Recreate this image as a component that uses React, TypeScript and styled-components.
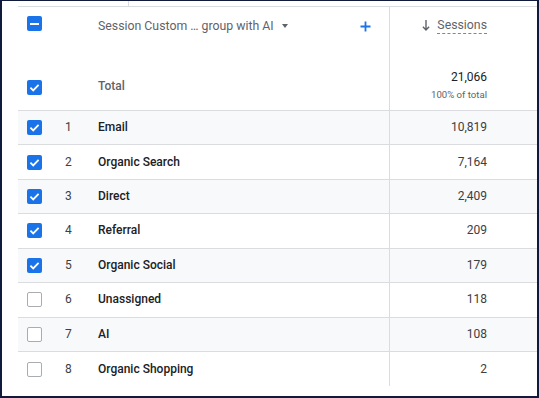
import styled, { createGlobalStyle } from "styled-components";

const GlobalStyle = createGlobalStyle`
  html, body {
    margin: 0;
    padding: 0;
    background: #fff;
  }
  * { box-sizing: border-box; }
`;

const Frame = styled.div`
  width: 539px;
  height: 398px;
  border: 2px solid #101a3c;
  border-top-width: 1px;
  background: #fff;
  font-family: Roboto, "Liberation Sans", Arial, sans-serif;
  overflow: hidden;
`;

const TopStrip = styled.div`
  height: 5px;
  margin-left: 16px;
  padding-left: 110px;
  div {
    width: 1px;
    height: 100%;
    background: #dadce0;
  }
`;

const Table = styled.div`
  margin-left: 16px;
  border-top: 1px solid #dadce0;
`;

const Row = styled.div<{ $shade?: boolean; $last?: boolean }>`
  display: grid;
  grid-template-columns: 37px 43px 291px 1fr;
  height: 34.43px;
  background: ${(p) => (p.$shade ? "#f8f9fa" : "#fff")};
  border-bottom: ${(p) => (p.$last ? "none" : "1px solid #dadce0")};
`;

const HeadRow = styled.div`
  display: grid;
  grid-template-columns: 37px 43px 291px 1fr;
  height: 41px;
`;

const TotalRow = styled.div`
  display: grid;
  grid-template-columns: 37px 43px 291px 1fr;
  height: 63px;
  border-bottom: 1px solid #dadce0;
`;

const Cell = styled.div<{ $align?: string; $pt?: number; $pb?: number; $pl?: number }>`
  display: flex;
  align-items: ${(p) => p.$align || "center"};
  padding-top: ${(p) => p.$pt || 0}px;
  padding-bottom: ${(p) => p.$pb || 0}px;
  padding-left: ${(p) => p.$pl || 0}px;
  min-width: 0;
`;

const ValueCell = styled.div<{ $align?: string; $pt?: number; $pb?: number }>`
  display: flex;
  flex-direction: column;
  align-items: flex-end;
  justify-content: ${(p) => p.$align || "center"};
  padding-right: 50px;
  padding-top: ${(p) => p.$pt || 0}px;
  padding-bottom: ${(p) => p.$pb || 0}px;
  border-left: 1px solid #dadce0;
`;

const Box = styled.span<{ $on?: boolean }>`
  display: inline-flex;
  align-items: center;
  justify-content: center;
  width: 15px;
  height: 15px;
  border-radius: 2px;
  background: ${(p) => (p.$on ? "#1a73e8" : "#fff")};
  border: ${(p) => (p.$on ? "none" : "1px solid #a9adb2")};
`;

const Dash = styled.span`
  width: 9px;
  height: 2px;
  background: #fff;
`;

const Index = styled.span`
  font-size: 12px;
  color: #3c4043;
  line-height: 15px;
`;

const Label = styled.span<{ $muted?: boolean }>`
  font-size: 12px;
  font-weight: 500;
  line-height: 15px;
  color: ${(p) => (p.$muted ? "#5f6368" : "#202124")};
  white-space: nowrap;
`;

const Num = styled.span`
  font-size: 12px;
  line-height: 15px;
  color: #3c4043;
`;

const DimHead = styled.div`
  display: flex;
  align-items: center;
  width: 100%;
  padding-right: 18px;
  font-size: 12.3px;
  line-height: 16px;
  color: #5f6368;
  white-space: nowrap;
`;

const Caret = styled.span`
  margin-left: 8px;
  width: 0;
  height: 0;
  border-left: 3.5px solid transparent;
  border-right: 3.5px solid transparent;
  border-top: 4px solid #5f6368;
`;

const AddBtn = styled.span`
  margin-left: auto;
  display: inline-flex;
`;

const MetricHead = styled.div`
  display: flex;
  align-items: center;
  gap: 7px;
  font-size: 12.3px;
  line-height: 16px;
  color: #5f6368;
`;

const Dotted = styled.span`
  border-bottom: 1px dashed #80868b;
`;

const Big = styled.span`
  font-size: 12px;
  line-height: 16px;
  color: #202124;
`;

const Small = styled.span`
  margin-top: 3px;
  font-size: 9.6px;
  line-height: 13px;
  color: #5f6368;
`;

const Check = () => (
  <svg width="15" height="15" viewBox="0 0 15 15">
    <path d="M3.4 7.7 L6.2 10.4 L11.6 4.9" fill="none" stroke="#fff" strokeWidth="1.8" />
  </svg>
);

const rows = [
  { name: "Email", value: "10,819", on: true },
  { name: "Organic Search", value: "7,164", on: true },
  { name: "Direct", value: "2,409", on: true },
  { name: "Referral", value: "209", on: true },
  { name: "Organic Social", value: "179", on: true },
  { name: "Unassigned", value: "118", on: false },
  { name: "AI", value: "108", on: false },
  { name: "Organic Shopping", value: "2", on: false },
];

export default function App() {
  return (
    <>
      <GlobalStyle />
      <Frame>
        <TopStrip>
          <div />
        </TopStrip>
        <Table>
          <HeadRow>
            <Cell $align="flex-start" $pt={9} $pl={9}>
              <Box $on>
                <Dash />
              </Box>
            </Cell>
            <Cell />
            <Cell $align="flex-start" $pt={11}>
              <DimHead>
                Session Custom … group with AI
                <Caret />
                <AddBtn>
                  <svg width="11" height="11" viewBox="0 0 11 11">
                    <path d="M5.5 0.5 V10.5 M0.5 5.5 H10.5" stroke="#1a73e8" strokeWidth="1.8" />
                  </svg>
                </AddBtn>
              </DimHead>
            </Cell>
            <ValueCell $align="flex-start" $pt={10}>
              <MetricHead>
                <svg width="8" height="11" viewBox="0 0 8 11">
                  <path d="M4 0 V10 M0.9 6.8 L4 9.9 L7.1 6.8" fill="none" stroke="#5f6368" strokeWidth="1.4" />
                </svg>
                <Dotted>Sessions</Dotted>
              </MetricHead>
            </ValueCell>
          </HeadRow>
          <TotalRow>
            <Cell $align="flex-end" $pb={15} $pl={9}>
              <Box $on>
                <Check />
              </Box>
            </Cell>
            <Cell />
            <Cell $align="flex-end" $pb={16}>
              <Label $muted>Total</Label>
            </Cell>
            <ValueCell $align="flex-end" $pb={9}>
              <Big>21,066</Big>
              <Small>100% of total</Small>
            </ValueCell>
          </TotalRow>
          {rows.map((r, i) => (
            <Row key={r.name} $shade={i % 2 === 0} $last={i === rows.length - 1}>
              <Cell $pl={9}>
                <Box $on={r.on}>{r.on && <Check />}</Box>
              </Cell>
              <Cell $pl={10}>
                <Index>{i + 1}</Index>
              </Cell>
              <Cell>
                <Label>{r.name}</Label>
              </Cell>
              <ValueCell>
                <Num>{r.value}</Num>
              </ValueCell>
            </Row>
          ))}
        </Table>
      </Frame>
    </>
  );
}
